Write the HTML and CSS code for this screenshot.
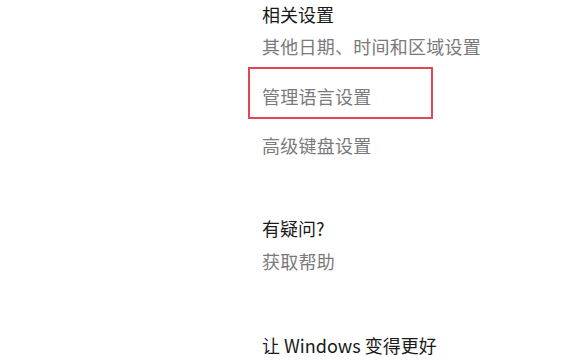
FILE: index.html
```html
<!DOCTYPE html>
<html lang="zh-CN">
<head>
<meta charset="utf-8">
<title>设置</title>
<link rel="stylesheet" href="styles.css">
</head>
<body>
<main class="page">
  <section class="group group-related">
    <h2 class="heading">相关设置</h2>
    <a class="link link-first" href="#">其他日期、时间和区域设置</a>
    <div class="highlight">
      <a class="link" href="#">管理语言设置</a>
    </div>
    <a class="link link-after-box" href="#">高级键盘设置</a>
  </section>
  <section class="group group-help">
    <h2 class="heading">有疑问?</h2>
    <a class="link link-first" href="#">获取帮助</a>
  </section>
  <section class="group group-feedback">
    <h2 class="heading">让 Windows 变得更好</h2>
  </section>
</main>
</body>
</html>
```

FILE: styles.css
```css
html, body {
  margin: 0;
  padding: 0;
  background: #ffffff;
}

.page {
  width: 578px;
  height: 363px;
  overflow: hidden;
  box-sizing: border-box;
  padding: 1px 0 0 262px;
  display: flex;
  flex-direction: column;
  font-family: "Noto Sans CJK SC", "Noto Sans", sans-serif;
  font-size: 18px;
  line-height: 26px;
}

.group {
  display: flex;
  flex-direction: column;
  align-items: flex-start;
}

.group-help {
  margin-top: 57px;
}

.group-feedback {
  margin-top: 58px;
}

.heading {
  margin: 0;
  font-size: 18px;
  font-weight: normal;
  color: #1a1a1a;
  height: 26px;
}

.link {
  display: block;
  color: #7a7a7a;
  text-decoration: none;
  height: 26px;
  white-space: nowrap;
  letter-spacing: 0.25px;
}

.link-first {
  margin-top: 6px;
}

.group-help .link-first {
  margin-top: 7px;
}

.highlight {
  margin: 8px 0 0 -14px;
  width: 185px;
  box-sizing: border-box;
  border: 2px solid #e24555;
  padding: 14px 12px 8px 12px;
}

.link-after-box {
  margin-top: 13px;
}
```
